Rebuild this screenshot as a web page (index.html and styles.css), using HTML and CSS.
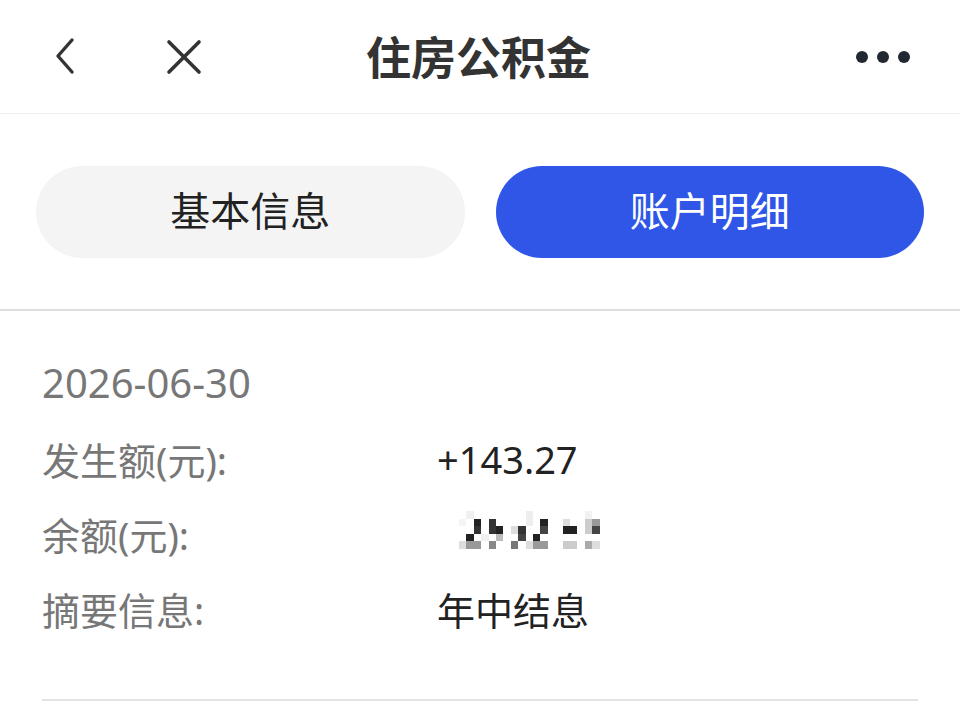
FILE: index.html
```html
<!DOCTYPE html>
<html lang="zh-CN">
<head>
    <meta charset="UTF-8">
    <meta name="viewport" content="width=device-width, initial-scale=1.0">
    <title>住房公积金</title>
    <link rel="stylesheet" href="styles.css">
</head>
<body>
    <header class="topbar">
        <div class="nav-left">
            <button class="icon-btn back" aria-label="返回">
                <svg width="22" height="38" viewBox="0 0 22 38"><path d="M19 3 L5 19 L19 35" fill="none" stroke="#333" stroke-width="3.4" stroke-linecap="round" stroke-linejoin="round"/></svg>
            </button>
            <button class="icon-btn close" aria-label="关闭">
                <svg width="36" height="36" viewBox="0 0 36 36"><path d="M3 3 L33 33 M33 3 L3 33" fill="none" stroke="#333" stroke-width="3.6" stroke-linecap="round"/></svg>
            </button>
        </div>
        <h1 class="title">住房公积金</h1>
        <div class="nav-right">
            <button class="icon-btn more" aria-label="更多">
                <svg width="56" height="14" viewBox="0 0 56 14"><circle cx="7" cy="7" r="6" fill="#222831"/><circle cx="28" cy="7" r="6" fill="#222831"/><circle cx="49" cy="7" r="6" fill="#222831"/></svg>
            </button>
        </div>
    </header>

    <nav class="tabs">
        <button class="tab">基本信息</button>
        <button class="tab active">账户明细</button>
    </nav>

    <main class="records">
        <section class="record">
            <div class="record-date">2026-06-30</div>
            <div class="record-row">
                <span class="label">发生额(元):</span>
                <span class="value">+143.27</span>
            </div>
            <div class="record-row">
                <span class="label">余额(元):</span>
                <span class="value">
                    <svg class="mosaic" width="148" height="38" viewBox="0 0 20 5" preserveAspectRatio="none" aria-label="已隐藏">
                        <g shape-rendering="crispEdges">
                            <rect x="1" y="0" width="1" height="1" fill="#f0f0f0"/>
                            <rect x="9" y="0" width="1" height="1" fill="#eeeeee"/>
                            <rect x="17" y="0" width="1" height="1" fill="#f2f2f2"/>

                            <rect x="0" y="1" width="1" height="1" fill="#f5f5f5"/>
                            <rect x="2" y="1" width="1" height="1" fill="#222"/>
                            <rect x="4" y="1" width="1" height="1" fill="#333"/>
                            <rect x="9" y="1" width="1" height="1" fill="#eee"/>
                            <rect x="11" y="1" width="1" height="1" fill="#222"/>
                            <rect x="14" y="1" width="1" height="1" fill="#ddd"/>
                            <rect x="17" y="1" width="1" height="1" fill="#ccc"/>
                            <rect x="18" y="1" width="1" height="1" fill="#999"/>

                            <rect x="2" y="2" width="1" height="1" fill="#333"/>
                            <rect x="4" y="2" width="1" height="1" fill="#333"/>
                            <rect x="5" y="2" width="1" height="1" fill="#222"/>
                            <rect x="7" y="2" width="1" height="1" fill="#ddd"/>
                            <rect x="8" y="2" width="1" height="1" fill="#333"/>
                            <rect x="11" y="2" width="1" height="1" fill="#444"/>
                            <rect x="14" y="2" width="2" height="1" fill="#222"/>
                            <rect x="17" y="2" width="1" height="1" fill="#ccc"/>
                            <rect x="18" y="2" width="1" height="1" fill="#444"/>

                            <rect x="1" y="3" width="1" height="1" fill="#222"/>
                            <rect x="3" y="3" width="1" height="1" fill="#f0f0f0"/>
                            <rect x="5" y="3" width="1" height="1" fill="#bbb"/>
                            <rect x="8" y="3" width="1" height="1" fill="#444"/>
                            <rect x="10" y="3" width="1" height="1" fill="#222"/>

                            <rect x="0" y="4" width="1" height="1" fill="#ddd"/>
                            <rect x="1" y="4" width="2" height="1" fill="#999"/>
                            <rect x="4" y="4" width="1" height="1" fill="#888"/>
                            <rect x="7" y="4" width="1" height="1" fill="#777"/>
                            <rect x="9" y="4" width="1" height="1" fill="#ddd"/>
                            <rect x="10" y="4" width="2" height="1" fill="#999"/>
                            <rect x="14" y="4" width="2" height="1" fill="#ccc"/>
                            <rect x="17" y="4" width="1" height="1" fill="#aaa"/>
                            <rect x="18" y="4" width="1" height="1" fill="#ddd"/>
                        </g>
                    </svg>
                </span>
            </div>
            <div class="record-row">
                <span class="label">摘要信息:</span>
                <span class="value">年中结息</span>
            </div>
        </section>
    </main>
</body>
</html>
```

FILE: styles.css
```css
body {
    margin: 0;
    padding: 0;
    background-color: #ffffff;
    font-family: "Noto Sans", "Noto Sans CJK SC", sans-serif;
    color: #222;
}
button {
    font-family: inherit;
}
.topbar {
    height: 114px;
    border-bottom: 1px solid #eeeeee;
    box-sizing: border-box;
    display: grid;
    grid-template-columns: 1fr auto 1fr;
    align-items: center;
    padding: 0 49px;
}
.nav-left {
    display: flex;
    align-items: center;
    gap: 91px;
    padding-left: 4px;
}
.nav-right {
    display: flex;
    justify-content: flex-end;
}
.icon-btn {
    background: none;
    border: none;
    padding: 0;
    display: flex;
    align-items: center;
    cursor: pointer;
}
.icon-btn.back {
    margin-top: -2px;
}
.title {
    margin: -2px 3px 0 0;
    font-family: "Noto Sans CJK SC", sans-serif;
    font-size: 45px;
    font-weight: 700;
    color: #333;
}
.tabs {
    display: flex;
    gap: 31px;
    padding: 52px 36px 51px;
    border-bottom: 2px solid #dedede;
}
.tab {
    flex: 1;
    height: 92px;
    padding: 0 0 6px;
    border: none;
    border-radius: 46px;
    background-color: #f4f4f4;
    color: #222;
    font-family: "Noto Sans CJK SC", sans-serif;
    font-size: 40px;
    cursor: pointer;
}
.tab.active {
    background-color: #2f56e7;
    color: #ffffff;
}
.records {
    padding: 0 42px;
}
.record {
    padding-top: 34px;
    padding-bottom: 53px;
    border-bottom: 2px solid #e4e4e4;
}
.record-date {
    font-size: 40px;
    line-height: 76px;
    color: #777;
}
.record-row {
    display: grid;
    grid-template-columns: 395px 1fr;
    align-items: center;
    height: 75px;
    font-size: 38px;
}
.label {
    color: #777;
}
.value {
    color: #222;
    display: flex;
    align-items: center;
}
.mosaic {
    margin-left: 22px;
    margin-top: -8px;
    filter: blur(0.6px);
}
```
